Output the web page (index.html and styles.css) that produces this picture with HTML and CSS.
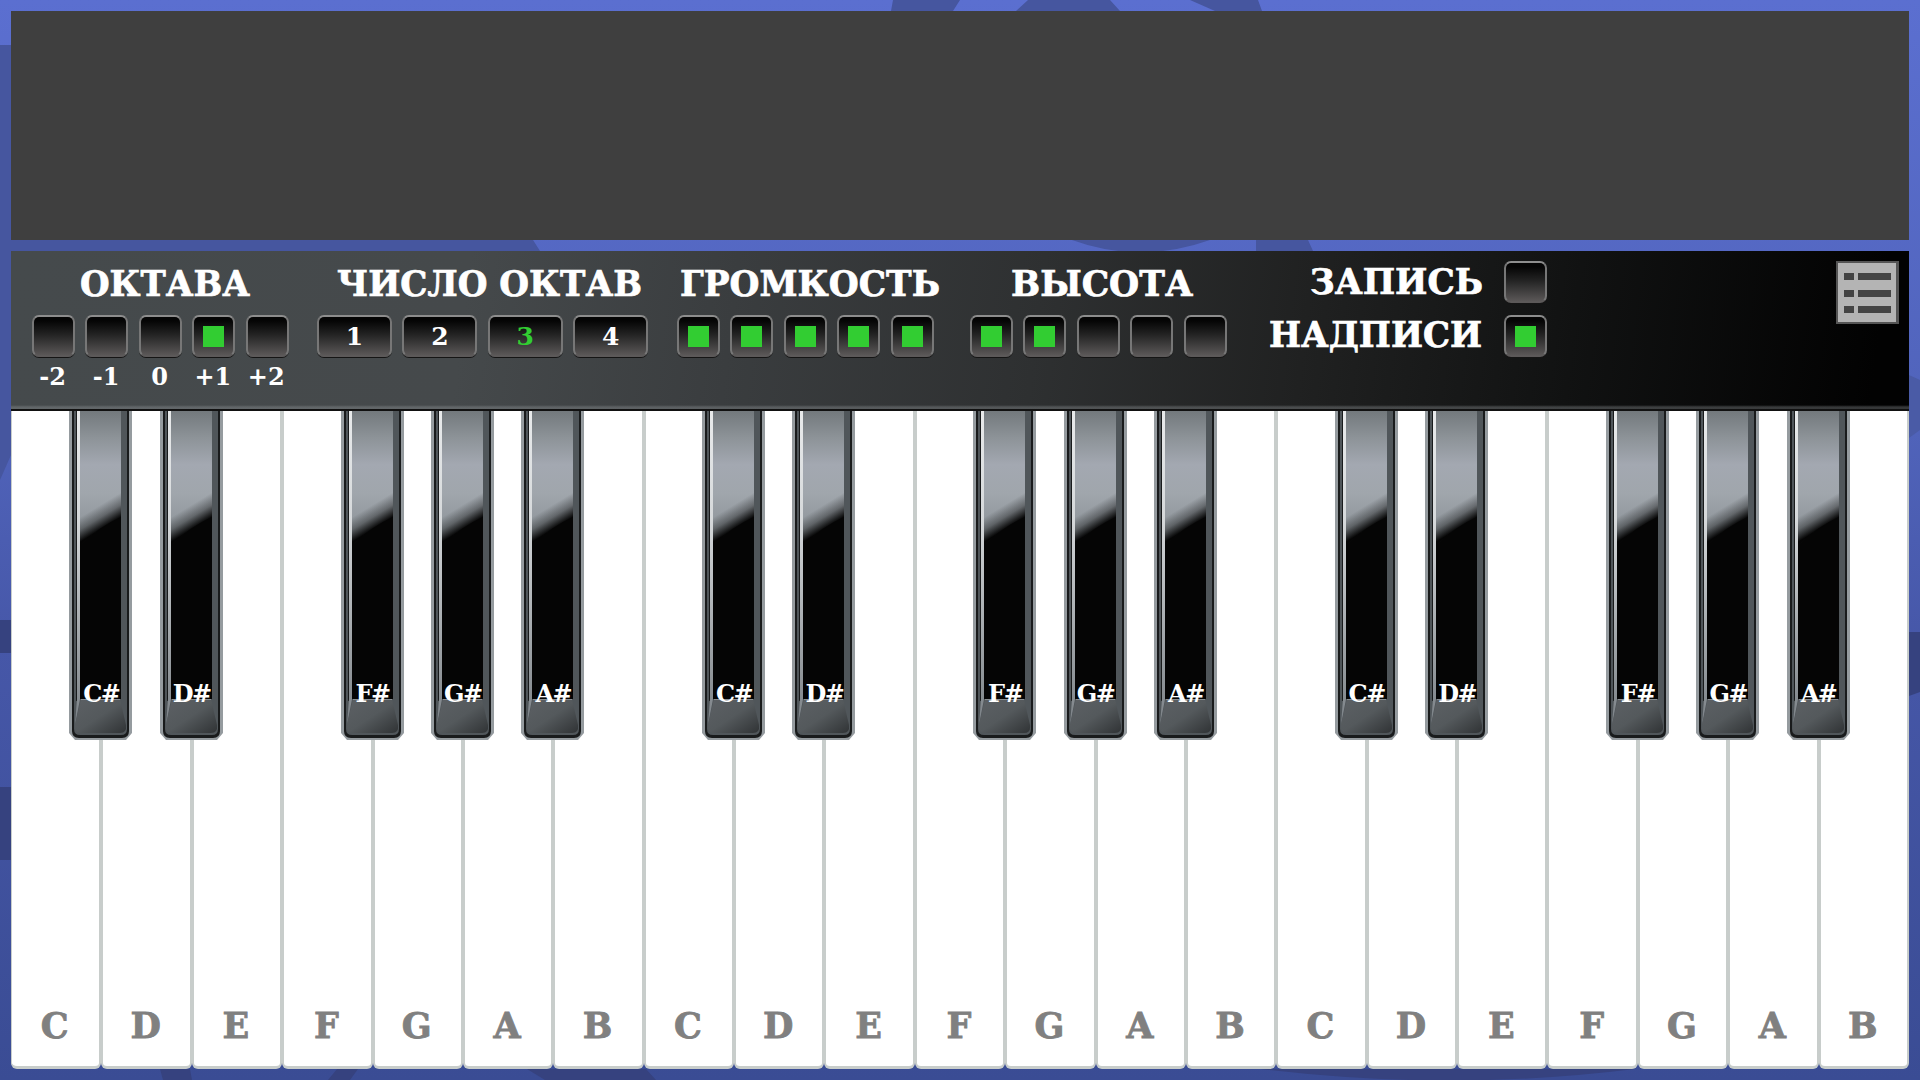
FILE: index.html
```
<!DOCTYPE html>
<html lang="ru">
<head>
	<meta charset="utf-8">
	<title>Синтезатор</title>
	<link rel="stylesheet" href="styles.css">
</head>
<body>
	<svg class="backdrop" viewBox="0 0 1920 1080">
		<defs>
			<linearGradient id="sky" x1="0" y1="0" x2="0" y2="1">
				<stop offset="0" stop-color="#5b6fd0"/>
				<stop offset="0.4" stop-color="#5063ba"/>
				<stop offset="0.6" stop-color="#4657a8"/>
				<stop offset="1" stop-color="#3a4c94"/>
			</linearGradient>
		</defs>
		<rect width="1920" height="1080" fill="url(#sky)"/>
		<g fill="#46569f">
			<path d="M0 45H11V240H533L540 251H11V455L0 480Z"/>
			<path d="M893 0H960L953 11H891ZM1028 0H1110L1120 11H1016ZM1190 0H1258L1262 11H1215Z"/>
			<path d="M1072 240H1210Q1140 265 1072 240ZM1256 240H1308L1313 251H1256Z"/>
		</g>
		<g fill="#36427f">
			<path d="M0 620H11V653H0ZM0 787H11V860H0ZM1909 632H1920V692L1909 696Z"/>
			<path d="M160 1069H190L192 1080H163ZM337 1069H358L350 1080H328ZM527 1069H646L656 1080H545ZM1261 1069H1635Q1450 1092 1261 1069Z"/>
		</g>
		<path d="M1909 375L1920 380V430L1909 438Z" fill="#4a5ba6"/>
	</svg>

	<div class="synth">
		<div class="screen"></div>
		<div class="panel">
			<div class="group octave">
				<svg class="caption" width="240" height="46"><text x="53" y="35" textLength="170" lengthAdjust="spacingAndGlyphs">ОКТАВА</text></svg>
				<div class="buttons">
					<div class="btn"></div>
					<div class="btn"></div>
					<div class="btn"></div>
					<div class="btn on"></div>
					<div class="btn"></div>
				</div>
				<div class="marks">
					<span>-2</span><span>-1</span><span>0</span><span>+1</span><span>+2</span>
				</div>
			</div>
			<div class="group count">
				<svg class="caption" width="340" height="46"><text x="25" y="35" textLength="305" lengthAdjust="spacingAndGlyphs">ЧИСЛО ОКТАВ</text></svg>
				<div class="buttons">
					<div class="btn wide">1</div>
					<div class="btn wide">2</div>
					<div class="btn wide active">3</div>
					<div class="btn wide">4</div>
				</div>
			</div>
			<div class="group volume">
				<svg class="caption" width="280" height="46"><text x="8" y="35" textLength="260" lengthAdjust="spacingAndGlyphs">ГРОМКОСТЬ</text></svg>
				<div class="buttons">
					<div class="btn on"></div>
					<div class="btn on"></div>
					<div class="btn on"></div>
					<div class="btn on"></div>
					<div class="btn on"></div>
				</div>
			</div>
			<div class="group pitch">
				<svg class="caption" width="256" height="46"><text x="46" y="35" textLength="182" lengthAdjust="spacingAndGlyphs">ВЫСОТА</text></svg>
				<div class="buttons">
					<div class="btn on"></div>
					<div class="btn on"></div>
					<div class="btn"></div>
					<div class="btn"></div>
					<div class="btn"></div>
				</div>
			</div>
			<div class="switches">
				<div class="switch">
					<svg class="caption" width="236" height="50"><text x="42" y="37" textLength="173" lengthAdjust="spacingAndGlyphs">ЗАПИСЬ</text></svg>
					<div class="btn"></div>
				</div>
				<div class="switch">
					<svg class="caption" width="236" height="50"><text x="1" y="36" textLength="213" lengthAdjust="spacingAndGlyphs">НАДПИСИ</text></svg>
					<div class="btn on"></div>
				</div>
			</div>
			<svg class="menu" width="63" height="63" viewBox="0 0 63 63">
				<rect width="63" height="63" fill="#555"/>
				<rect x="2" y="2" width="58" height="59" fill="#b4b4b4"/>
				<path d="M8 12h10v7H8zM22 12h33v7H22zM8 29h10v7H8zM22 29h33v7H22zM8 45h10v7H8zM22 45h33v7H22z" fill="#444"/>
			</svg>
		</div>
		<div class="keys" id="keys"></div>
	</div>

	<svg width="0" height="0" class="defs">
		<defs>
			<linearGradient id="shine" x1="0" y1="0" x2="0" y2="1">
				<stop offset="0" stop-color="#73797d"/>
				<stop offset="0.2" stop-color="#8d9398"/>
				<stop offset="0.4" stop-color="#a3a8b1"/>
				<stop offset="0.62" stop-color="#a0a6ac"/>
				<stop offset="1" stop-color="#858c91"/>
			</linearGradient>
			<linearGradient id="fade" gradientUnits="userSpaceOnUse" x1="10" y1="107" x2="21" y2="125">
				<stop offset="0" stop-color="#050505" stop-opacity="0"/>
				<stop offset="0.5" stop-color="#050505" stop-opacity="0.35"/>
				<stop offset="1" stop-color="#050505"/>
			</linearGradient>
			<linearGradient id="edge" x1="0" y1="0" x2="0" y2="1">
				<stop offset="0" stop-color="#e8eaeb"/>
				<stop offset="0.35" stop-color="#d5d8da"/>
				<stop offset="1" stop-color="#7b8186"/>
			</linearGradient>
			<linearGradient id="lip" x1="0" y1="0" x2="1" y2="1">
				<stop offset="0" stop-color="#5c6064"/>
				<stop offset="0.5" stop-color="#54595c"/>
				<stop offset="1" stop-color="#303335"/>
			</linearGradient>
			<symbol id="blackkey" viewBox="0 0 63 329">
				<path d="M0 0H63V322L57 329H6L0 322Z" fill="#959b9f"/>
				<path d="M3 0H60V320Q60 327 53 327H10Q3 327 3 320Z" fill="#191b1c"/>
				<path d="M5 0H58V318Q58 324 52 324H11Q5 324 5 318Z" fill="#50565a"/>
				<path d="M7 0H8V290H7ZM58 0H60V318H58Z" fill="#191b1c"/>
				<path d="M8 0H11V288L6 314L8 288Z" fill="url(#edge)"/>
				<path d="M11 0H52V288H11Z" fill="#050505"/>
				<path d="M11 0H52V106Q31 115 11 134Z" fill="url(#shine)"/>
				<path d="M11 50H52V107Q31 116 11 135Z" fill="url(#fade)"/>
				<path d="M12 288H51L57 314Q58 322 51 322H12Q5 322 6 314Z" fill="url(#lip)"/>
				<path d="M12 288.500H51" stroke="#8a8f93"/>
			</symbol>
		</defs>
	</svg>

	<script type="text/javascript">
		let notes = ["C", "D", "E", "F", "G", "A", "B"];
		let sharps = ["C", "D", "F", "G", "A"];
		let html = "";

		for (let i = 0; i < 21; i++) {
			let note = notes[i % 7];
			html += `<div class="key"><span class="note">${note}</span>`;
			if (sharps.indexOf(note) != -1) {
				html += `<div class="black">
					<svg width="63" height="329"><use href="#blackkey"/></svg>
					<span>${note}#</span>
				</div>`;
			}
			html += `</div>`;
		}

		document.getElementById("keys").innerHTML = html;
	</script>
</body>
</html>
```

FILE: styles.css
```
* {
  box-sizing: border-box;
}

body {
  margin: 0;
  width: 1920px;
  height: 1080px;
  overflow: hidden;
  background: #4c5fb8;
  font-family: "DejaVu Serif", serif;
  font-weight: bold;
}

.backdrop {
  position: absolute;
  left: 0;
  top: 0;
  width: 1920px;
  height: 1080px;
}

.defs {
  position: absolute;
}

.synth {
  position: relative;
  display: flex;
  flex-direction: column;
  height: 1080px;
  padding: 11px 11px 11px;
}

.screen {
  height: 229px;
  margin-bottom: 11px;
  background: #3f3f3f;
}

/* control panel */
.panel {
  display: flex;
  height: 160px;
  padding: 10px 10px 0 16px;
  border-bottom: 2px solid #111;
  background:
    linear-gradient(transparent 154px, rgba(150, 155, 158, 0.35) 156px),
    linear-gradient(97deg, #454a4c 0%, #45494b 24%, #3a3d3f 38%, #2e3031 54%, #202121 68%, #111212 82%, #020202 98%);
}

.caption {
  display: block;
  overflow: visible;
}

.caption text {
  font-size: 35px;
  fill: #fff;
  stroke: #fff;
  stroke-width: 0.7px;
}

.octave {
  width: 285px;
}

.count {
  width: 360px;
}

.volume {
  width: 293px;
}

.pitch {
  width: 303px;
}

.buttons {
  display: flex;
  gap: 10.4px;
  margin-top: 8px;
  padding-left: 5px;
}

.btn {
  display: flex;
  flex: none;
  align-items: center;
  justify-content: center;
  width: 43px;
  height: 42px;
  border: 2px solid;
  border-color: #8d8d8d #777 #5c5959 #777;
  border-radius: 7px;
  box-shadow: 0 1px 0 #151515;
  background: linear-gradient(#050505 10%, #222 45%, #5a5757 100%);
  color: #fff;
  font-size: 25px;
}

.btn.wide {
  width: 75px;
}

.btn.on::after {
  content: "";
  width: 21px;
  height: 21px;
  background: #32cd32;
}

.btn.active {
  color: #32cd32;
}

.marks {
  display: flex;
  margin-top: 4px;
  margin-left: -1px;
  color: #fff;
  font-size: 24px;
  line-height: 31px;
}

.marks span {
  width: 53.4px;
  text-align: center;
}

.switches {
  display: flex;
  flex-direction: column;
  gap: 12px;
}

.switch {
  display: flex;
  height: 42px;
}

.switch .caption {
  margin-top: -4px;
}

.menu {
  margin-left: auto;
}

/* keyboard */
.keys {
  display: grid;
  flex: 1;
  grid-template-columns: repeat(21, 1fr);
}

.key {
  position: relative;
  display: flex;
  align-items: flex-end;
  justify-content: center;
  padding: 0 2px 20px 0;
  border: solid #c8cdcb;
  border-width: 0 2px 3px 2px;
  border-radius: 0 0 6px 6px;
  background: #fff;
  color: #808080;
}

.key:first-child {
  border-left-width: 1px;
}

.note {
  font-size: 35px;
  line-height: 41px;
  -webkit-text-stroke: 0.8px #808080;
}

.black {
  position: absolute;
  z-index: 1;
  top: 0;
  right: -33px;
  width: 63px;
  height: 329px;
}

.black svg {
  display: block;
}

.black span {
  position: absolute;
  left: 0;
  top: 268px;
  width: 64px;
  text-align: center;
  color: #fff;
  font-size: 24px;
  line-height: 30px;
  letter-spacing: -1.5px;
}
```
